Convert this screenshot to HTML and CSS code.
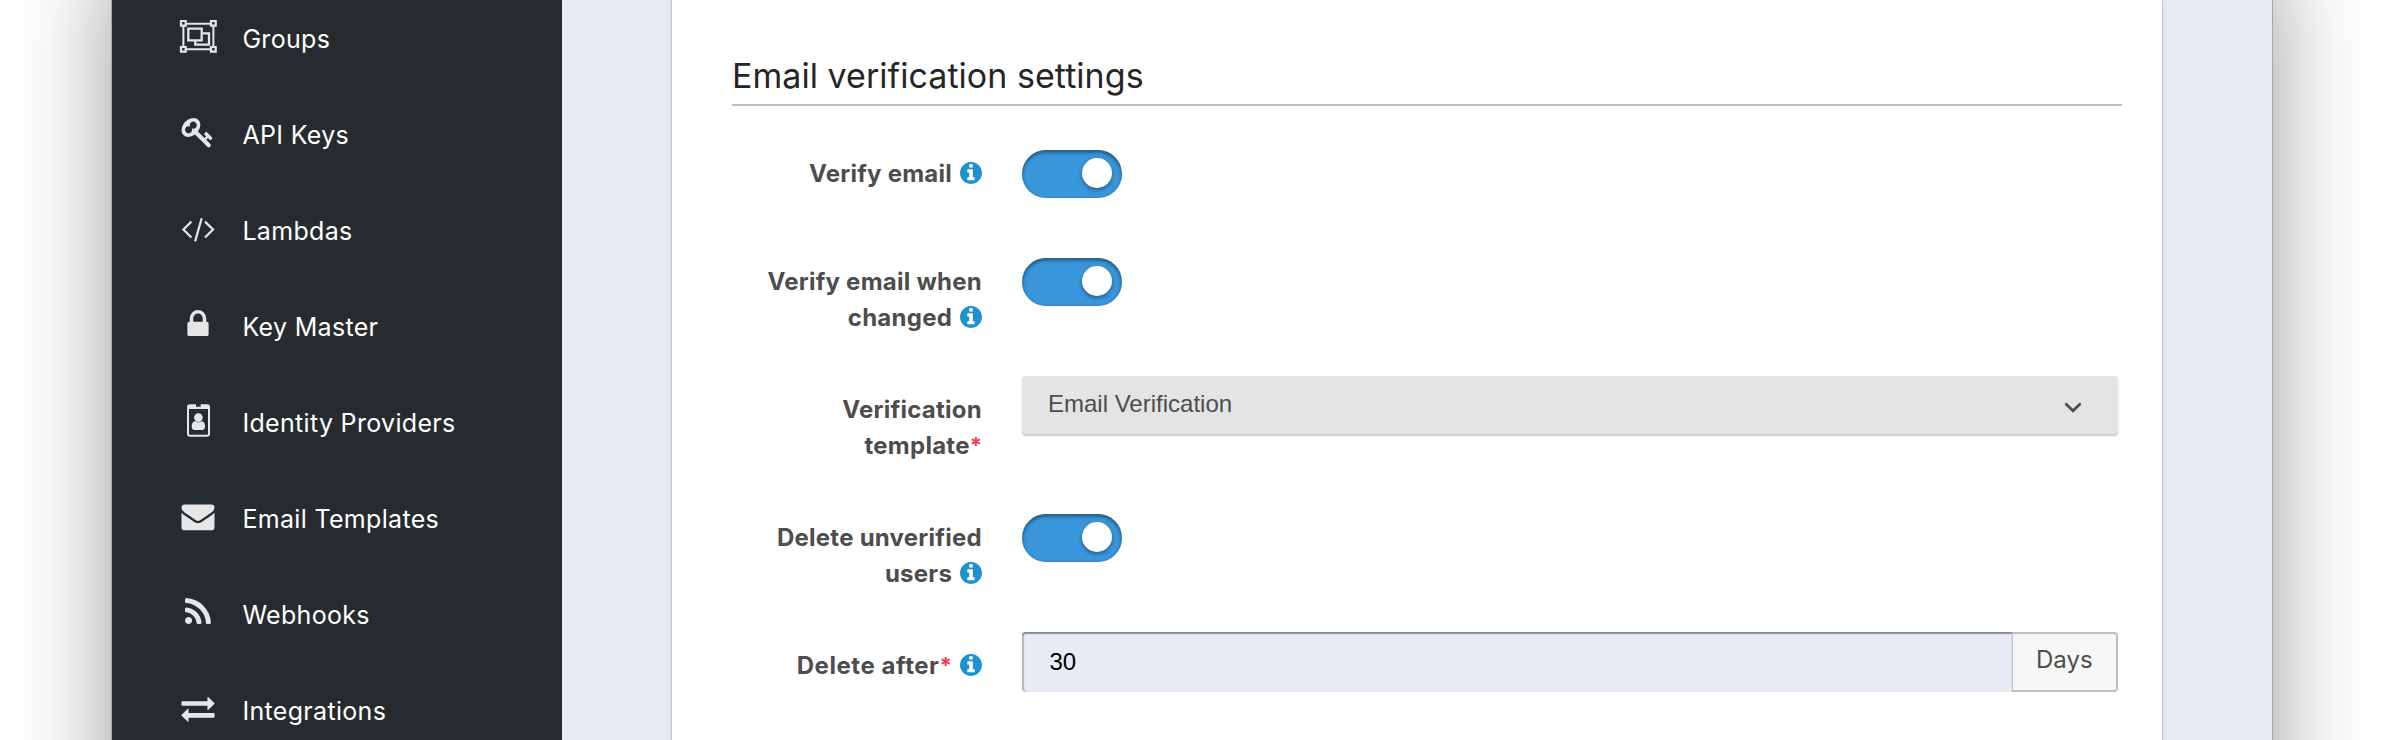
FILE: index.html
```
<!DOCTYPE html>
<html lang="en">
<head>
<meta charset="utf-8">
<title>Email verification settings</title>
<link rel="stylesheet" href="styles.css">
</head>
<body>
<svg class="sprite" aria-hidden="true">
  <symbol id="info" viewBox="128 128 1536 1536"><path d="M1152 1376v-160q0-14-9-23t-23-9h-96v-512q0-14-9-23t-23-9h-320q-14 0-23 9t-9 23v160q0 14 9 23t23 9h96v320h-96q-14 0-23 9t-9 23v160q0 14 9 23t23 9h448q14 0 23-9t9-23zm-128-896v-160q0-14-9-23t-23-9h-192q-14 0-23 9t-9 23v160q0 14 9 23t23 9h192q14 0 23-9t9-23zm640 416q0 209-103 385.5t-279.5 279.5-385.5 103-385.5-103-279.5-279.5-103-385.5 103-385.5 279.5-279.5 385.5-103 385.5 103 279.5 279.5 103 385.5z"/></symbol>
</svg>
<div class="window">
  <nav class="sidebar">
    <a class="nav-item"><svg class="nav-icon" viewBox="0 0 40 40"><g fill="none" stroke="currentColor" stroke-width="2"><path d="M8 7.8h24.5M8 33.3h24.5M5.4 10v21M35.4 10v21"/><path stroke-width="2.2" d="M3 5h4.7v4.7h-4.7zM33 5h4.7v4.7h-4.7zM3 31h4.7v4.7h-4.7zM33 31h4.7v4.7h-4.7z"/><path stroke-width="2.3" d="M10.3 12.7h13.4v11.6h-13.4zM25 17.3h6v11.4h-13.7v-4.4"/></g></svg><span>Groups</span></a>
    <a class="nav-item"><svg class="nav-icon" viewBox="-190 -201 2172 2172"><path fill="currentColor" d="M832 512q0-80-56-136t-136-56-136 56-56 136q0 42 19 83-41-19-83-19-80 0-136 56t-56 136 56 136 136 56 136-56 56-136q0-42-19-83 41 19 83 19 80 0 136-56t56-136zm851 704q0 17-49 66t-66 49q-9 0-28.5-16t-36.5-33-38.5-40-24.5-26l-96 96 220 220q28 28 28 68 0 42-39 81t-81 39q-40 0-68-28l-671-671q-176 131-365 131-163 0-265.5-102.5t-102.5-265.5q0-160 95-313t248-248 313-95q163 0 265.5 102.5t102.5 265.5q0 189-131 365l355 355 96-96q-3-3-26-24.5t-40-38.5-33-36.5-16-28.5q0-17 49-66t66-49q13 0 23 10 6 6 46 44.5t82 79.5 86.5 86 73 78 28.5 41z"/></svg><span>API Keys</span></a>
    <a class="nav-item"><svg class="nav-icon" viewBox="0 0 40 40"><path fill="none" stroke="currentColor" stroke-width="2.2" d="M13.4 13.6l-8 7.9 8 8M23.7 10.2l-6.6 23.2M27 13.6l8 7.9-8 8"/></svg><span>Lambdas</span></a>
    <a class="nav-item"><svg class="nav-icon" viewBox="-190 -201 2172 2172"><path fill="currentColor" d="M640 768h512v-192q0-106-75-181t-181-75-181 75-75 181v192zm832 96v576q0 40-28 68t-68 28h-960q-40 0-68-28t-28-68v-576q0-40 28-68t68-28h32v-192q0-184 132-316t316-132 316 132 132 316v192h32q40 0 68 28t28 68z"/></svg><span>Key Master</span></a>
    <a class="nav-item"><svg class="nav-icon" viewBox="0 0 40 40"><path fill="currentColor" fill-rule="evenodd" d="M12 4.3h6v2.4h4.7v-2.4h6.3a3 3 0 0 1 3 3v26.4a3 3 0 0 1-3 3h-17a3 3 0 0 1-3-3v-26.4a3 3 0 0 1 3-3zM11 9v24.7a1 1 0 0 0 1 1h17a1 1 0 0 0 1-1v-24.7z"/><circle fill="currentColor" cx="20.4" cy="17.6" r="4.3"/><path fill="currentColor" d="M17 21.3q3.4 2.2 6.8 0c2.4.2 3.2 2.7 3.2 5.2 0 2-1 3.5-2.6 3.5h-8c-1.6 0-2.7-1.5-2.7-3.5 0-2.5.9-5 3.3-5.2z"/></svg><span>Identity Providers</span></a>
    <a class="nav-item"><svg class="nav-icon" viewBox="-190 -201 2172 2172"><path fill="currentColor" d="M1792 710v794q0 66-47 113t-113 47h-1472q-66 0-113-47t-47-113v-794q44 49 101 87 362 246 497 345 57 42 92.5 65.5t94.5 48 110 24.5h2q51 0 110-24.5t94.5-48 92.5-65.5q170-123 498-345 57-39 100-87zm0-294q0 79-49 151t-122 123q-376 261-468 325-10 7-42.5 31t-54 38.5-52 32.5-57.5 27-50 9h-2q-23 0-50-9t-57.5-27-52-32.5-54-38.5-42.5-31q-91-64-262-182.5t-205-142.5q-62-42-117-115.5t-55-136.5q0-78 41.5-130t118.5-52h1472q65 0 112.5 47t47.5 113z"/></svg><span>Email Templates</span></a>
    <a class="nav-item"><svg class="nav-icon" viewBox="-190 -201 2172 2172"><path fill="currentColor" d="M576 1344q0 80-56 136t-136 56-136-56-56-136 56-136 136-56 136 56 56 136zm512 123q2 28-17 48-18 21-47 21h-135q-25 0-43-16.5t-20-41.5q-22-229-184.5-391.5t-391.5-184.5q-25-2-41.5-20t-16.5-43v-135q0-29 21-47 17-17 43-17h5q160 13 306 80.5t259 181.5q114 113 181.5 259t80.5 306zm512 2q2 27-18 47-18 20-46 20h-143q-26 0-44.5-17.5t-19.5-42.5q-12-215-101-408.5t-231.5-336-336-231.5-408.5-102q-25-1-42.5-19.5t-17.5-43.5v-143q0-28 20-46 18-18 44-18h3q262 13 501.5 120t425.5 294q187 186 294 425.5t120 501.5z"/></svg><span>Webhooks</span></a>
    <a class="nav-item"><svg class="nav-icon" viewBox="-190 -201 2172 2172"><path fill="currentColor" d="M1792 1184v192q0 13-9.5 22.5t-22.5 9.5h-1376v192q0 13-9.5 22.5t-22.5 9.5q-12 0-24-10l-319-320q-9-9-9-22 0-14 9-23l320-320q9-9 23-9 13 0 22.5 9.5t9.5 22.5v192h1376q13 0 22.5 9.5t9.5 22.5zm0-544q0 14-9 23l-320 320q-9 9-23 9-13 0-22.5-9.5t-9.5-22.5v-192h-1376q-13 0-22.5-9.5t-9.5-22.5v-192q0-13 9.5-22.5t22.5-9.5h1376v-192q0-14 9-23t23-9q12 0 24 10l319 319q9 9 9 23z"/></svg><span>Integrations</span></a>
  </nav>
  <main class="content">
    <section class="card">
      <h2 class="legend">Email verification settings</h2>
      <div class="row row-toggle">
        <label class="label">Verify email <svg class="info"><use href="#info"/></svg></label>
        <div class="toggle"><i class="knob"></i></div>
      </div>
      <div class="row row-toggle">
        <label class="label">Verify email when changed <svg class="info"><use href="#info"/></svg></label>
        <div class="toggle"><i class="knob"></i></div>
      </div>
      <div class="row">
        <label class="label">Verification template<span class="required">*</span></label>
        <div class="select"><span>Email Verification</span><svg class="chevron" viewBox="0 0 18 12"><path d="M2.2 2.2l6.8 6.6 6.8-6.6"/></svg></div>
      </div>
      <div class="row row-toggle">
        <label class="label">Delete unverified users <svg class="info"><use href="#info"/></svg></label>
        <div class="toggle"><i class="knob"></i></div>
      </div>
      <div class="row">
        <label class="label label-wide">Delete after<span class="required">*</span> <svg class="info"><use href="#info"/></svg></label>
        <div class="input-group"><div class="input">30</div><div class="addon">Days</div></div>
      </div>
    </section>
  </main>
</div>
</body>
</html>
```

FILE: styles.css
```
* { box-sizing: border-box; }

html { height: 740px; overflow: hidden; }

body {
  margin: 0;
  height: 740px;
  overflow: hidden;
  background: #fff;
  font-family: Inter, "Liberation Sans", sans-serif;
}

.sprite { display: none; }

.window {
  position: relative;
  z-index: 0;
  display: flex;
  width: 2160px;
  height: 740px;
  margin: 0 auto;
}

/* Window backdrop, running past the viewport so its shadow stays even */
.window::before {
  content: "";
  position: absolute;
  inset: -60px 0 -200px;
  z-index: -1;
  background: #e6ebf4;
  box-shadow: 0 0 0 1px #a6a7a8, 0 20px 92px rgba(0, 0, 0, .4);
}

.sidebar {
  width: 450px;
  height: 740px;
  overflow: hidden;
  background: #262b2f;
}

.nav-item {
  display: flex;
  align-items: center;
  gap: 24px;
  height: 96px;
  padding-left: 66.4px;
  color: #fff;
  font-size: 25px;
  letter-spacing: .32px;
  line-height: 36px;
}

.nav-item:first-child { margin-top: -12px; }

.nav-item span { padding-top: 5px; }

.nav-icon {
  width: 40px;
  height: 40px;
  color: #e6e6e6;
}

.content {
  flex: 1;
  padding: 0 110px;
}

.card {
  height: 740px;
  padding: 0 40px 0 60px;
  background: #fff;
  box-shadow: 0 0 0 1px #c3c9ce, 0 2px 6px rgba(60, 75, 80, .15);
}

.legend {
  height: 106px;
  margin: 0 0 34px;
  padding: 54px 0 0;
  border-bottom: 2px solid #bfbfbf;
  color: #262626;
  font-size: 34px;
  font-weight: 400;
  letter-spacing: .04px;
  line-height: 44px;
}

.row {
  display: flex;
  gap: 40px;
  margin-bottom: 40px;
}

.row:last-child { margin-bottom: 0; }

.row-toggle { padding-top: 10px; min-height: 68px; }

.label {
  width: 250px;
  padding: 16px 0 0 24px;
  color: #4d4d4d;
  font-size: 24px;
  font-weight: 700;
  letter-spacing: .25px;
  line-height: 36px;
  text-align: right;
}

.label-wide { letter-spacing: .55px; }

.row-toggle .label { padding-top: 6px; }

.required {
  color: #f03e52;
  font-size: 22px;
  letter-spacing: 0;
  line-height: 1;
  vertical-align: 1px;
}

.info {
  width: 22px;
  height: 22px;
  margin-left: 2px;
  fill: #1e91cf;
  vertical-align: -2px;
}

.toggle {
  display: flex;
  justify-content: flex-end;
  width: 100px;
  height: 48px;
  padding: 8px 10px;
  border-radius: 24px;
  background: #3a97dc;
  box-shadow: inset 0 2px 4px rgba(0, 0, 0, .5);
}

.knob {
  width: 30px;
  height: 30px;
  border-radius: 50%;
  background: #fff;
  box-shadow: 0 2px 4px rgba(0, 0, 0, .4);
}

.select {
  display: flex;
  flex: none;
  justify-content: space-between;
  width: 1096px;
  height: 59px;
  padding: 10px 36px 0 26px;
  border-radius: 4px;
  background: #e4e4e4;
  box-shadow: inset 0 -1px 0 #cbcbcb, 0 1px 2px rgba(0, 0, 0, .2);
  color: #4d4d4d;
  font: 24px/36px "Liberation Sans", sans-serif;
}

.chevron {
  width: 18px;
  height: 12px;
  margin-top: 16px;
  fill: none;
  stroke: #4d4d4d;
  stroke-width: 2.7;
  stroke-linecap: round;
}

.input-group {
  display: flex;
  width: 1096px;
  height: 60px;
}

.input {
  flex: 1;
  padding: 12px 0 0 27.5px;
  border-radius: 4px 0 0 4px;
  background: #e6ebf4;
  box-shadow: inset 0 2px 1px #8b8d91, inset 2px 0 1px #b4b7bb;
  color: #000;
  font: 24px/36px "Liberation Sans", sans-serif;
}

.addon {
  width: 106px;
  padding: 8px 0 0 23px;
  border: 2px solid #bfbfbf;
  border-left-width: 1px;
  border-radius: 0 4px 4px 0;
  background: #f7f7f7;
  color: #4d4d4d;
  font-size: 24px;
  line-height: 36px;
}
```
